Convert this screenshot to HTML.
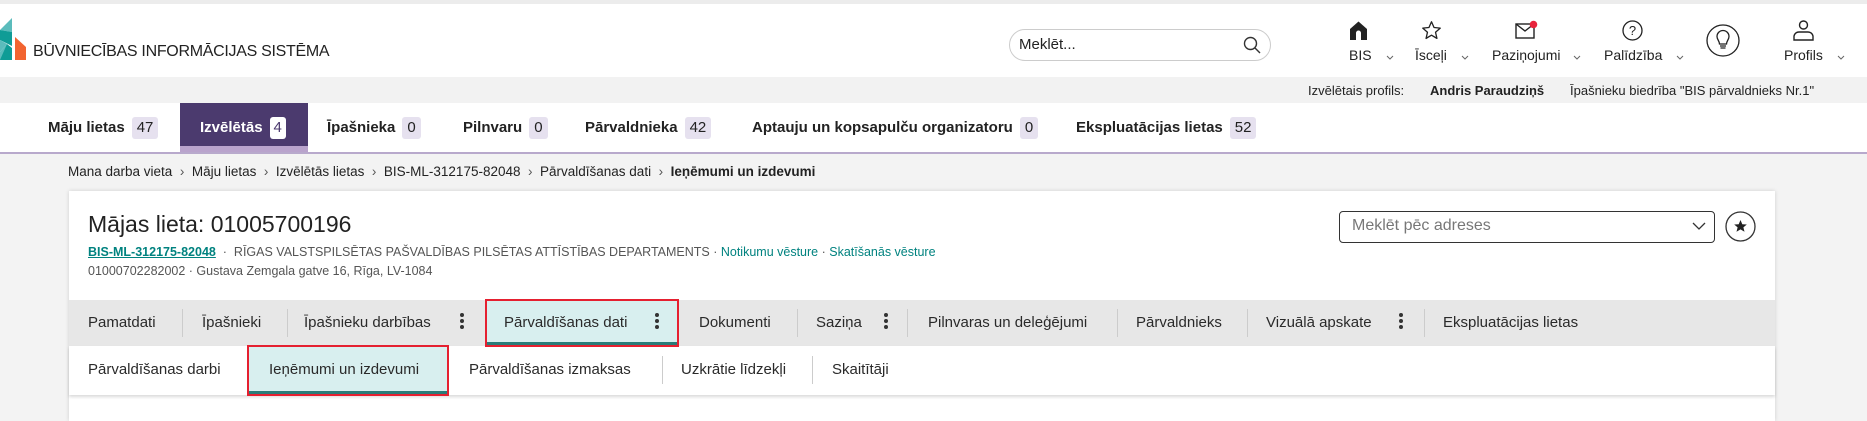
<!DOCTYPE html>
<html><head><meta charset="utf-8">
<style>
*{box-sizing:border-box;margin:0;padding:0}
body{width:1867px;height:407px;overflow:hidden;background:#f3f3f3;font-family:"Liberation Sans",sans-serif;color:#222;position:relative}
.a{position:absolute;white-space:nowrap}
.hdr{left:0;top:4px;width:1867px;height:73px;background:#fff}
.topline{left:0;top:0;width:1867px;height:4px;background:#ececec}
.band{left:0;top:77px;width:1867px;height:26px;background:#f2f2f2}
.tabs{left:0;top:103px;width:1867px;height:51px;background:#fff;border-bottom:2px solid #b8a9cc}
.tab{top:103px;height:49px;line-height:49px;font-size:15px;font-weight:bold;color:#222}
.bdg{display:inline-block;background:#e6e1ef;border-radius:3px;padding:0 5px;line-height:22px;font-weight:normal;margin-left:7px;font-size:15px}
.act{background:#4b3a6e;color:#fff;left:180px;width:128px;padding-left:20px;border-bottom:6px solid #b9a3cc}
.act .bdg{background:#fff;color:#4b3a6e;padding:0 4px}
.lbl{font-size:14px;color:#222;top:47px}
.chev{top:55px}
.card{left:69px;top:191px;width:1706px;height:230px;background:#fff;box-shadow:0 0 4px rgba(0,0,0,.15)}
.t1{top:300px;left:69px;width:1706px;height:46px;background:#e7e7e7}
.t2{top:346px;left:69px;width:1706px;height:49px;background:#fff;box-shadow:0 2px 3px rgba(0,0,0,.15)}
.ti{font-size:15px;color:#2a2a2a;line-height:20px}
.sep{width:1px;height:28px;background:#ccc}
.dots{width:4px}
.dots i{display:block;width:4px;height:4px;border-radius:2px;background:#333;margin-bottom:2px}
</style></head><body>
<div class="a topline"></div>
<div class="a hdr"></div>
<svg class="a" style="left:0;top:18px" width="27" height="42" viewBox="0 0 27 42">
<polygon points="0,12 12,0 12,14" fill="#5bbcbc"/>
<polygon points="0,12 12,14 12,28 0,22" fill="#0f9c96"/>
<polygon points="0,22 7,26 0,34" fill="#5bbcbc"/>
<polygon points="0,36 7,26 12,30 12,42 0,42" fill="#0f9c96"/>
<polygon points="0,34 7,26 0,42" fill="#5bbcbc"/>
<polygon points="15,19 26,29 26,42 15,42" fill="#f26430"/>
</svg>
<div class="a" style="left:33px;top:43px;font-size:16px;color:#222;letter-spacing:-0.3px">BŪVNIECĪBAS INFORMĀCIJAS SISTĒMA</div>

<div class="a" style="left:1009px;top:29px;width:262px;height:32px;border:1px solid #ccc;border-radius:16px;background:#fff"></div>
<div class="a" style="left:1019px;top:36px;font-size:15px;color:#222">Meklēt...</div>
<svg class="a" style="left:1243px;top:36px" width="18" height="18" viewBox="0 0 18 18"><circle cx="7.5" cy="7.5" r="6" fill="none" stroke="#333" stroke-width="1.4"/><line x1="12" y1="12" x2="17" y2="17" stroke="#333" stroke-width="1.4"/></svg>

<svg class="a" style="left:1349px;top:21px" width="19" height="19" viewBox="0 0 19 19"><path d="M1 8 L9.5 0.5 L18 8 V19 H12 V12 a2.5 2.5 0 0 0 -5 0 V19 H1Z" fill="#222"/></svg>
<div class="a lbl" style="left:1349px">BIS</div><svg class="a chev" style="left:1386px" width="8" height="5" viewBox="0 0 8 5"><path d="M1 1L4 4L7 1" fill="none" stroke="#666"/></svg>
<svg class="a" style="left:1421px;top:20px" width="21" height="21" viewBox="0 0 24 24"><path d="M12 2 L14.9 8.6 L22 9.3 L16.6 14 L18.2 21 L12 17.3 L5.8 21 L7.4 14 L2 9.3 L9.1 8.6Z" fill="none" stroke="#222" stroke-width="1.5" stroke-linejoin="round"/></svg>
<div class="a lbl" style="left:1415px">Īsceļi</div><svg class="a chev" style="left:1461px" width="8" height="5" viewBox="0 0 8 5"><path d="M1 1L4 4L7 1" fill="none" stroke="#666"/></svg>
<svg class="a" style="left:1515px;top:20px" width="24" height="20" viewBox="0 0 24 20"><rect x="1" y="4" width="18" height="14" fill="none" stroke="#222" stroke-width="1.4"/><path d="M1 4 L10 11 L19 4" fill="none" stroke="#222" stroke-width="1.4"/><circle cx="18.5" cy="4.5" r="3.8" fill="#e8243c"/></svg>
<div class="a lbl" style="left:1492px">Paziņojumi</div><svg class="a chev" style="left:1573px" width="8" height="5" viewBox="0 0 8 5"><path d="M1 1L4 4L7 1" fill="none" stroke="#666"/></svg>
<svg class="a" style="left:1622px;top:20px" width="21" height="21" viewBox="0 0 21 21"><circle cx="10.5" cy="10.5" r="9.5" fill="none" stroke="#222" stroke-width="1.3"/><text x="10.5" y="15" font-size="13" text-anchor="middle" font-family="Liberation Sans" fill="#222">?</text></svg>
<div class="a lbl" style="left:1604px">Palīdzība</div><svg class="a chev" style="left:1676px" width="8" height="5" viewBox="0 0 8 5"><path d="M1 1L4 4L7 1" fill="none" stroke="#666"/></svg>
<svg class="a" style="left:1706px;top:24px" width="34" height="33" viewBox="0 0 34 33"><ellipse cx="17" cy="16.5" rx="16" ry="15.5" fill="none" stroke="#222" stroke-width="1.3"/><path d="M13.5 20 C13.5 17 11 15.5 11 12.5 a6 6 0 0 1 12 0 C23 15.5 20.5 17 20.5 20Z M14 22 H20 M14.5 24 H19.5" fill="none" stroke="#222" stroke-width="1.3"/></svg>
<svg class="a" style="left:1793px;top:20px" width="21" height="21" viewBox="0 0 21 21"><circle cx="10.5" cy="5" r="4" fill="none" stroke="#222" stroke-width="1.4"/><path d="M1 20 V16 a5 5 0 0 1 5 -4 H15 a5 5 0 0 1 5 4 V20Z" fill="none" stroke="#222" stroke-width="1.4"/></svg>
<div class="a lbl" style="left:1784px">Profils</div><svg class="a chev" style="left:1837px" width="8" height="5" viewBox="0 0 8 5"><path d="M1 1L4 4L7 1" fill="none" stroke="#666"/></svg>

<div class="a band"></div>
<div class="a" style="left:1308px;top:83px;font-size:13px;color:#222">Izvēlētais profils:</div>
<div class="a" style="left:1430px;top:83px;font-size:13px;font-weight:bold;color:#222">Andris Paraudziņš</div>
<div class="a" style="left:1570px;top:83px;font-size:13px;color:#222">Īpašnieku biedrība "BIS pārvaldnieks Nr.1"</div>

<div class="a tabs"></div>
<div class="a tab" style="left:48px">Māju lietas<span class="bdg">47</span></div>
<div class="a tab act">Izvēlētās<span class="bdg">4</span></div>
<div class="a tab" style="left:327px">Īpašnieka<span class="bdg">0</span></div>
<div class="a tab" style="left:463px">Pilnvaru<span class="bdg">0</span></div>
<div class="a tab" style="left:585px">Pārvaldnieka<span class="bdg">42</span></div>
<div class="a tab" style="left:752px">Aptauju un kopsapulču organizatoru<span class="bdg">0</span></div>
<div class="a tab" style="left:1076px">Ekspluatācijas lietas<span class="bdg">52</span></div>

<div class="a" style="left:68px;top:164px;font-size:13.5px;color:#222">Mana darba vieta &nbsp;<span style="color:#555">&#x203A;</span>&nbsp; Māju lietas &nbsp;<span style="color:#555">&#x203A;</span>&nbsp; Izvēlētās lietas &nbsp;<span style="color:#555">&#x203A;</span>&nbsp; BIS-ML-312175-82048 &nbsp;<span style="color:#555">&#x203A;</span>&nbsp; Pārvaldīšanas dati &nbsp;<span style="color:#555">&#x203A;</span>&nbsp; <b>Ieņēmumi un izdevumi</b></div>

<div class="a card"></div>
<div class="a" style="left:88px;top:211px;font-size:23px;color:#222">Mājas lieta: 01005700196</div>
<div class="a" style="left:88px;top:245px;font-size:12.5px;color:#555"><b style="color:#00827f;text-decoration:underline">BIS-ML-312175-82048</b> &nbsp;·&nbsp; RĪGAS VALSTSPILSĒTAS PAŠVALDĪBAS PILSĒTAS ATTĪSTĪBAS DEPARTAMENTS · <span style="color:#00827f">Notikumu vēsture</span> · <span style="color:#00827f">Skatīšanās vēsture</span></div>
<div class="a" style="left:88px;top:264px;font-size:12.5px;color:#555">01000702282002 · Gustava Zemgala gatve 16, Rīga, LV-1084</div>

<div class="a" style="left:1339px;top:211px;width:376px;height:32px;border:1px solid #333;border-radius:4px;background:#fff"></div>
<div class="a" style="left:1352px;top:217px;font-size:16px;color:#777">Meklēt pēc adreses</div>
<svg class="a" style="left:1692px;top:222px" width="14" height="9" viewBox="0 0 14 9"><path d="M1 1 L7 7 L13 1" fill="none" stroke="#333" stroke-width="1.3"/></svg>
<svg class="a" style="left:1725px;top:211px" width="31" height="31" viewBox="0 0 31 31"><circle cx="15.5" cy="15.5" r="14.5" fill="none" stroke="#333" stroke-width="1.3"/><path d="M15.5 9 L17.3 13.2 L21.8 13.5 L18.4 16.4 L19.5 20.8 L15.5 18.4 L11.5 20.8 L12.6 16.4 L9.2 13.5 L13.7 13.2Z" fill="#222"/></svg>

<div class="a t1"></div>
<div class="a t2"></div>
<div class="a" style="left:485px;top:299px;width:194px;height:48px;background:#d8efef;border:2px solid #e52030;box-shadow:inset 0 -3px 0 #2a7b78"></div>
<div class="a" style="left:247px;top:345px;width:202px;height:51px;background:#d8efef;border:2px solid #e52030;box-shadow:inset 0 -3px 0 #2a7b78"></div>

<div class="a ti" style="left:88px;top:313px">Pamatdati</div>
<div class="a sep" style="left:182px;top:309px"></div>
<div class="a ti" style="left:202px;top:313px">Īpašnieki</div>
<div class="a sep" style="left:287px;top:309px"></div>
<div class="a ti" style="left:304px;top:313px">Īpašnieku darbības</div>
<div class="a dots" style="left:460px;top:313px"><i></i><i></i><i></i></div>
<div class="a ti" style="left:504px;top:313px">Pārvaldīšanas dati</div>
<div class="a dots" style="left:655px;top:313px"><i></i><i></i><i></i></div>
<div class="a ti" style="left:699px;top:313px">Dokumenti</div>
<div class="a sep" style="left:797px;top:309px"></div>
<div class="a ti" style="left:816px;top:313px">Saziņa</div>
<div class="a dots" style="left:884px;top:313px"><i></i><i></i><i></i></div>
<div class="a sep" style="left:907px;top:309px"></div>
<div class="a ti" style="left:928px;top:313px">Pilnvaras un deleģējumi</div>
<div class="a sep" style="left:1117px;top:309px"></div>
<div class="a ti" style="left:1136px;top:313px">Pārvaldnieks</div>
<div class="a sep" style="left:1247px;top:309px"></div>
<div class="a ti" style="left:1266px;top:313px">Vizuālā apskate</div>
<div class="a dots" style="left:1399px;top:313px"><i></i><i></i><i></i></div>
<div class="a sep" style="left:1424px;top:309px"></div>
<div class="a ti" style="left:1443px;top:313px">Ekspluatācijas lietas</div>

<div class="a ti" style="left:88px;top:360px">Pārvaldīšanas darbi</div>
<div class="a ti" style="left:269px;top:360px">Ieņēmumi un izdevumi</div>
<div class="a ti" style="left:469px;top:360px">Pārvaldīšanas izmaksas</div>
<div class="a sep" style="left:662px;top:356px"></div>
<div class="a ti" style="left:681px;top:360px">Uzkrātie līdzekļi</div>
<div class="a sep" style="left:812px;top:356px"></div>
<div class="a ti" style="left:832px;top:360px">Skaitītāji</div>
</body></html>
